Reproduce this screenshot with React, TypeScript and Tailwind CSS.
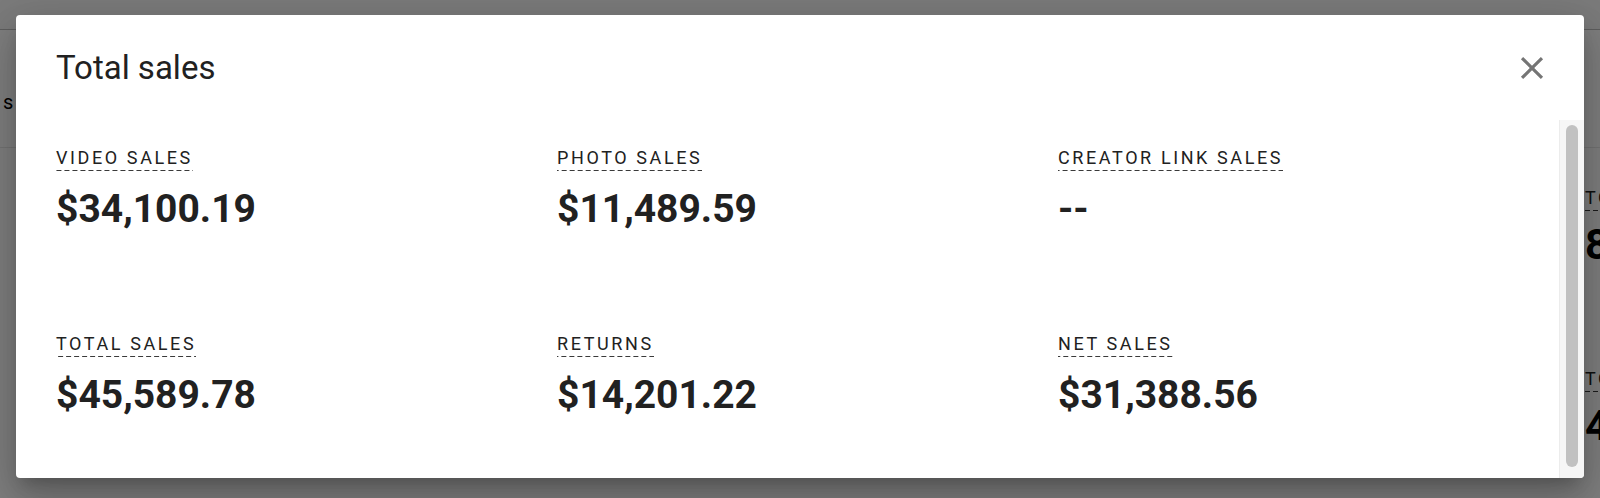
import React from "react";

const stats = [
  { label: "VIDEO SALES", value: "$34,100.19" },
  { label: "PHOTO SALES", value: "$11,489.59" },
  { label: "CREATOR LINK SALES", value: "--" },
  { label: "TOTAL SALES", value: "$45,589.78" },
  { label: "RETURNS", value: "$14,201.22" },
  { label: "NET SALES", value: "$31,388.56" },
];

function DashedLabel({ children }: { children: React.ReactNode }) {
  return (
    <span className="inline-block pb-[1px] text-[18px] leading-[24px] tracking-[2.6px] text-[#212121] bg-[linear-gradient(to_right,#3a3a3a_0_5px,transparent_5px_8px)] bg-[length:8px_1px] bg-repeat-x bg-bottom whitespace-nowrap">
      {children}
    </span>
  );
}

export default function App() {
  return (
    <div className="relative w-[1600px] h-[498px] overflow-hidden bg-white font-[Roboto,sans-serif]">
      {/* page behind the dialog */}
      <div className="flex flex-col h-full">
        <div className="h-[30px] bg-[#f7f7f7] border-b border-[#bdbdbd]" />
        <div className="h-[118px] flex items-start border-b border-[#e6e6e6] pl-[3px] pt-[60px]">
          <span className="text-[20px] leading-[24px] text-black">s</span>
        </div>
        <div className="flex-1 flex justify-end">
          <div className="w-[15px] overflow-hidden flex flex-col pt-[38px]">
            <div className="flex flex-col gap-[10px] w-[200px]">
              <DashedLabel>TOTAL VIEWS</DashedLabel>
              <span className="text-[42px] leading-[48px] font-bold text-black">8,904</span>
            </div>
            <div className="flex flex-col gap-[10px] w-[200px] mt-[98px]">
              <DashedLabel>TOTAL ORDERS</DashedLabel>
              <span className="text-[42px] leading-[48px] font-bold text-black">412</span>
            </div>
          </div>
        </div>
      </div>

      {/* overlay */}
      <div className="absolute inset-0 bg-black/50" />

      {/* dialog */}
      <div className="absolute left-4 top-[15px] w-[1568px] h-[463px] bg-white rounded-[4px] flex flex-col overflow-hidden shadow-[0_11px_15px_-7px_rgba(0,0,0,0.2),0_24px_38px_3px_rgba(0,0,0,0.14),0_9px_46px_8px_rgba(0,0,0,0.12)]">
        <div className="h-[105px] shrink-0 flex justify-between items-start pl-10 pr-[33px] pt-[33px]">
          <h2 className="text-[33px] leading-[40px] font-normal text-[#212121]">Total sales</h2>
          <button className="mt-[1px] w-[38px] h-[38px] flex items-center justify-center text-[#757575]" aria-label="Close">
            <svg viewBox="0 0 24 24" width="38" height="38" fill="currentColor">
              <path d="M19 6.41L17.59 5 12 10.59 6.41 5 5 6.41 10.59 12 5 17.59 6.41 19 12 13.41 17.59 19 19 17.59 13.41 12z" />
            </svg>
          </button>
        </div>
        <div className="flex-1 flex min-h-0">
          <div className="flex-1 pl-10 pt-[26px] grid grid-cols-3 content-start gap-y-[101px]">
            {stats.map((s) => (
              <div key={s.label} className="flex flex-col items-start">
                <DashedLabel>{s.label}</DashedLabel>
                <span className="mt-[16px] text-[39px] leading-[44px] font-bold text-[#212121]">{s.value}</span>
              </div>
            ))}
          </div>
          <div className="w-[25px] shrink-0 bg-[#f6f6f6] border-l border-[#ececec] pt-[5px] pb-[11px] pl-[6px] pr-[6px]">
            <div className="h-full w-[12px] rounded-full bg-[#c1c1c1]" />
          </div>
        </div>
      </div>
    </div>
  );
}
